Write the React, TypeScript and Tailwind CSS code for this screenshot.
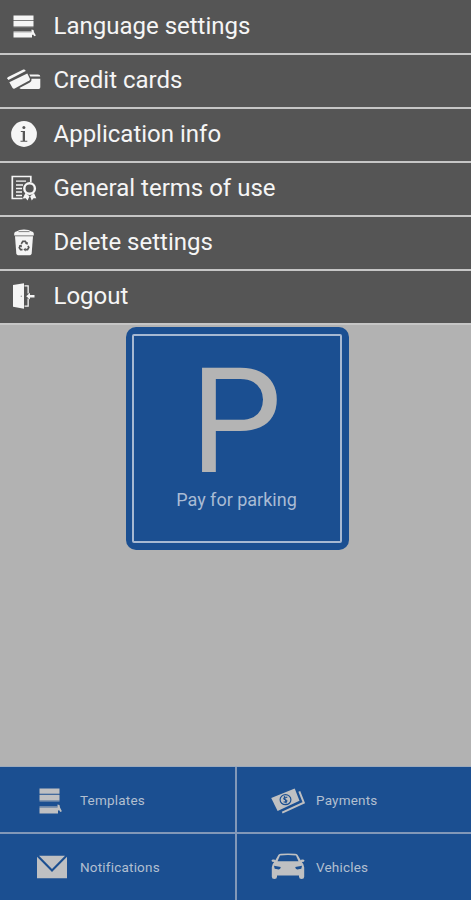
import type { ReactNode } from "react";

const svg = "block shrink-0";

function ListIcon({ height = 26 }: { height?: number }) {
  return (
    <svg className={svg} width="24" height={height} viewBox="0 0 24 26" preserveAspectRatio="none" fill="currentColor">
      <path d="M1.500.5h20v5.300h-20zM1.500 6.800h20v5.700h-20zM1.500 19.500h18.500v6H1.500z" />
      <path d="M1.500 12.500h20v1.300h-20zM1.500 18h18v1.500h-18z" opacity=".5" />
      <path d="m19.500 16.500 2 .5.500 2.500 1.900 3.800-1.600.8-1.300-2-1.500 1.200z" />
    </svg>
  );
}

function CardsIcon() {
  return (
    <svg className={svg} width="34" height="24" viewBox="0 0 34 24" fill="currentColor">
      <path d="M.3 10.300q0-.8.8-1.200l15.200-7.500q1.200-.5 1.900.5l.5 1L1.400 12z" />
      <path d="m2.300 14.200 18-8.800 2.600 5.400q.4 1-.6 1.600L7.700 20.600q-1.400.7-2.100-.5z" />
      <path d="M22.300 6.500H31q2.300 0 2.300 2h-10zM24.500 10.800h8.800v8.500q0 1.600-1.600 1.600H14q-1.300 0-1.600-.8l10.500-5.500q2-1.200 1.600-3.800z" />
    </svg>
  );
}

function InfoIcon() {
  return (
    <svg className={svg} width="26" height="26" viewBox="0 0 26 26">
      <circle cx="13" cy="13" r="12.900" fill="currentColor" />
      <circle cx="12.900" cy="6.400" r="1.500" fill="#555" />
      <path d="M9.800 10h4.200v9.800h2.300v.9H9.500v-.9h2.200v-8.800H9.800z" fill="#555" />
    </svg>
  );
}

function TermsIcon() {
  return (
    <svg className={svg} width="26" height="26" viewBox="0 0 26 26" fill="none" stroke="currentColor">
      <path d="M11.500 23.500H1.300V1.500h18.500V7" strokeWidth="1.700" />
      <path d="M5 6.200h10M5 10h7M5 13.500h6M5 17h6M5 20.500h6" strokeWidth="1.300" />
      <path d="m14.400 18-2.700 5.500 3.100-.3 1.700 2.300 2.100-4.300zM23 18l2.300 5.300-2.800-.1-1.700 2.300-1.700-4.300z" fill="currentColor" stroke="none" />
      <circle cx="18.600" cy="13.500" r="5.300" fill="#555" strokeWidth="2.400" />
    </svg>
  );
}

function TrashIcon() {
  return (
    <svg className={svg} width="22" height="28" viewBox="0 0 22 28">
      <path d="M1.200 7.400V5.500Q1.200 3.600 4 3.200L6.500 2q4.500-1 9 0L18 3.200q2.800.4 2.800 2.300v1.900z" fill="currentColor" />
      <path d="M2 8.200h18l-1.300 17.100q-.2 1.900-2 1.900H5.300q-1.800 0-2-1.900z" fill="currentColor" />
      <path d="M5.500 3.600h11" stroke="#555" strokeWidth=".7" />
      <path d="m8.300 15.900 1.500-2.500h2.500l1.300 2M15 17.800l.8 1.600-1.300 2.200h-2.200M9.500 21.600H7.600l-1.300-2 1-2" fill="none" stroke="#555" strokeWidth="1.700" />
      <path d="m15 13.900-.4 2.800-2.700-1zM12.600 19.700v3.800l-2.200-1.900zM5.800 17.400l2.800-.8.4 2.800z" fill="#555" />
    </svg>
  );
}

function LogoutIcon() {
  return (
    <svg className={svg} width="24" height="26" viewBox="0 0 24 26" fill="currentColor">
      <path d="M1 2 12 .3v25.400L1 23.800z" />
      <path d="M12.500 2.300h4.300v8.200h-1.300V3.500h-3zM12.500 22.500h3v-6.900h1.300v8.200h-4.300z" />
      <path d="M14.200 13.200 18 9.800v2.100h4.500v2.600H18v2.100z" />
      <circle cx="9.300" cy="13.200" r=".7" fill="#999" />
    </svg>
  );
}

function MailIcon() {
  return (
    <svg className={svg} width="30" height="24" viewBox="0 0 30 24" fill="currentColor">
      <path d="M2 .700h26L15 14zM0 1.800l15 15.200L30 1.800v21.500H0z" />
    </svg>
  );
}

function MoneyIcon() {
  return (
    <svg className={svg} width="34" height="26" viewBox="0 0 34 26">
      <path d="m.2 10 23.500-9.500 4.800 12.200L6.600 23z" fill="currentColor" />
      <path d="m28.300 3.300 4.500 11.300L11.200 24.700" fill="none" stroke="currentColor" strokeWidth="2" />
      <ellipse cx="14.500" cy="11.700" rx="5.400" ry="5" fill="none" stroke="#1b4f91" strokeWidth="1.200" />
      <path d="M16.300 9.400q-3.300-.6-3.600 1.200c-.2 1.500 3.600.8 3.300 2.400-.3 1.300-2.200 1.400-3.400.8M13.300 8.200l2 7.200" fill="none" stroke="#1b4f91" strokeWidth="1.100" />
    </svg>
  );
}

function CarIcon() {
  return (
    <svg className={svg} width="34" height="28" viewBox="0 0 34 28">
      <path d="M7.500 1.800Q8.400.9 10 .8q7-.8 14 0 1.600.1 2.500 1l3.200 5.400 1-.6q2.900-.2 2.800 1.200-.1 1.100-2.700 1.300 2.400 2.400 2.400 5.100v9.500q0 2.200-2.600 2.200t-2.600-2.200v-1.200H6v1.200q0 2.200-2.600 2.200T.8 23.700v-9.500q0-2.700 2.400-5.100Q.6 8.900.500 7.800.4 6.400 3.300 6.600l1 .6z" fill="currentColor" />
      <path d="M9 2.500q8-1.200 16 0l2.500 5.800h-21z" fill="#1b4f91" />
      <path d="m3 12.700 6.800 1.300q-.3 2.400-2 2.400l-4.100-.6zM31 12.700 24.200 14q.3 2.400 2 2.400l4.100-.6z" fill="#1b4f91" />
    </svg>
  );
}

const menu: { label: string; icon: ReactNode }[] = [
  { label: "Language settings", icon: <ListIcon height={23} /> },
  { label: "Credit cards", icon: <CardsIcon /> },
  { label: "Application info", icon: <InfoIcon /> },
  { label: "General terms of use", icon: <TermsIcon /> },
  { label: "Delete settings", icon: <TrashIcon /> },
  { label: "Logout", icon: <LogoutIcon /> },
];

function Tile({ label, icon, className }: { label: string; icon: ReactNode; className: string }) {
  return (
    <div className={`flex items-center ${className}`}>
      <span className="flex w-[34px] justify-center text-[#bfc0c2]">{icon}</span>
      <span className="ml-[11px] text-[13.500px] tracking-[0.2px] text-[#b2bfd0]">{label}</span>
    </div>
  );
}

export default function App() {
  return (
    <div className="flex h-[900px] w-[471px] flex-col overflow-hidden bg-[#b2b2b2] font-['Roboto',sans-serif]">
      <nav className="flex flex-col bg-[#555555] pt-px">
        {menu.map((item) => (
          <div key={item.label} className="flex h-[54px] items-center border-b-2 border-[#c6c6c6] text-[#f5f5f5]">
            <span className="mb-[2px] ml-[7px] flex w-[34px] justify-center">{item.icon}</span>
            <span className="mb-[2px] ml-[12.500px] text-[24px] leading-[28px] whitespace-nowrap">{item.label}</span>
          </div>
        ))}
      </nav>
      <main className="flex flex-1 justify-center pt-[2px] pl-[3px]">
        <section className="h-[223px] w-[223px] rounded-[10px] bg-[#1b4f91] py-[7px] pr-[7px] pl-[6px]">
          <div className="flex h-full flex-col items-center rounded-[2px] border-2 border-[#a7b9d2] text-center">
            <div className="mt-[32px] mr-px h-[122px] text-[146px] leading-[110px] text-[#b4b4b4]">P</div>
            <div className="text-[18px] leading-[20px] text-[#a9bbd4]">Pay for parking</div>
          </div>
        </section>
      </main>
      <footer className="grid h-[134px] grid-cols-[237px_1fr] grid-rows-[67px_66px] border-t border-[#9daabb] bg-[#1b4f91]">
        <Tile label="Templates" icon={<span className="-ml-[4px]"><ListIcon /></span>} className="border-r-2 border-b-2 border-[#8298b8] pt-[2px] pl-[35px]" />
        <Tile label="Payments" icon={<MoneyIcon />} className="border-b-2 border-[#8298b8] pt-[2px] pl-[34px]" />
        <Tile label="Notifications" icon={<MailIcon />} className="border-r-2 border-[#8298b8] pl-[35px]" />
        <Tile label="Vehicles" icon={<CarIcon />} className="pl-[34px]" />
      </footer>
    </div>
  );
}
